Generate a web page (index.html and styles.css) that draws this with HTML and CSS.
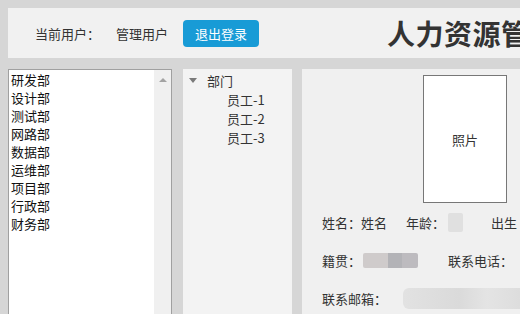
FILE: index.html
```html
<!DOCTYPE html>
<html lang="zh-CN">
<head>
  <meta charset="UTF-8" />
  <title>人力资源管理系统</title>
  <link rel="stylesheet" href="styles.css">
</head>
<body>
  <div class="header">
    <span class="user-label">当前用户：</span>
    <span class="user-name">管理用户</span>
    <button class="logout">退出登录</button>
    <h1 class="title">人力资源管理系统</h1>
  </div>

  <div class="main">
    <div class="dept-list">
      <ul class="items">
        <li>研发部</li>
        <li>设计部</li>
        <li>测试部</li>
        <li>网路部</li>
        <li>数据部</li>
        <li>运维部</li>
        <li>项目部</li>
        <li>行政部</li>
        <li>财务部</li>
      </ul>
      <div class="scrollbar"><span class="arrow-up"></span></div>
    </div>

    <div class="tree">
      <div class="tree-root"><span class="caret"></span>部门</div>
      <div class="tree-item">员工-1</div>
      <div class="tree-item">员工-2</div>
      <div class="tree-item">员工-3</div>
    </div>

    <div class="detail">
      <div class="photo">照片</div>
      <div class="row">
        <span class="f-name">姓名：姓名</span>
        <span>年龄：</span>
        <span class="blur b-age"></span>
        <span class="f-birth">出生</span>
      </div>
      <div class="row">
        <span>籍贯：</span>
        <span class="blur b-home"></span>
        <span class="f-phone">联系电话：</span>
      </div>
      <div class="row">
        <span>联系邮箱：</span>
        <span class="blur b-mail"></span>
      </div>
    </div>
  </div>
</body>
</html>
```

FILE: styles.css
```css
html, body {
  height: 100%;
}
body {
  margin: 8px 0 0 8px;
  background: #d6d6d6;
  font-family: "Microsoft YaHei", "Noto Sans CJK SC", sans-serif;
  font-size: 13px;
  color: #333;
  overflow: hidden;
}
.header {
  background: #f1f1f1;
  height: 50px;
  display: flex;
  align-items: center;
  padding-left: 27px;
  white-space: nowrap;
}
.header > * {
  flex: none;
}
.user-name {
  margin-left: 16px;
}
.logout {
  margin-left: 15px;
  width: 76px;
  height: 27px;
  border: none;
  border-radius: 4px;
  background: #189bd6;
  color: #fff;
  font-family: inherit;
  font-size: 13px;
  padding: 0;
}
.title {
  margin: 0 0 0 128px;
  font-size: 28px;
  font-weight: bold;
  color: #333;
  letter-spacing: 0.5px;
}
.main {
  display: flex;
  margin-top: 11px;
  height: 260px;
}
.dept-list {
  width: 162px;
  flex: none;
  background: #fff;
  border: 1px solid #a0a0a0;
  border-bottom: none;
  display: flex;
}
.items {
  list-style: none;
  margin: 0;
  padding: 1px 0 0 2px;
  flex: 1;
  color: #111;
}
.items li {
  line-height: 18px;
}
.scrollbar {
  width: 17px;
  background: #f0f0f0;
  position: relative;
}
.arrow-up {
  position: absolute;
  left: 5px;
  top: 8px;
  border-left: 4px solid transparent;
  border-right: 4px solid transparent;
  border-bottom: 4px solid #a3a3a3;
}
.tree {
  width: 109px;
  flex: none;
  margin-left: 11px;
  background: #f3f3f3;
  padding-top: 2px;
}
.tree-root {
  display: flex;
  align-items: center;
  line-height: 19px;
  padding-left: 6px;
}
.caret {
  border-left: 4px solid transparent;
  border-right: 4px solid transparent;
  border-top: 5px solid #7a7a7a;
  margin-right: 10px;
}
.tree-item {
  line-height: 19px;
  padding-left: 44px;
}
.detail {
  width: 300px;
  flex: none;
  margin-left: 10px;
  background: #f0f0f0;
  padding-top: 6px;
}
.photo {
  margin-left: 121px;
  width: 82px;
  height: 126px;
  background: #fff;
  border: 1px solid #777;
  display: flex;
  align-items: center;
  justify-content: center;
}
.row {
  display: flex;
  align-items: center;
  height: 38px;
  padding-left: 20px;
  white-space: nowrap;
}
.row:first-of-type {
  margin-top: 2px;
}
.f-name {
  width: 84px;
}
.blur {
  display: inline-block;
  height: 19px;
  background: #dcdcdc;
  border-radius: 2px;
}
.b-age {
  width: 15px;
  margin-left: 3px;
  background: #e0e0e0;
}
.f-birth {
  margin-left: 28px;
}
.b-home {
  width: 55px;
  height: 15px;
  margin-left: 2px;
  background: linear-gradient(to right, #cfcbcb 0 45%, #b3b3b7 45% 70%, #bdbbbf 70%);
}
.f-phone {
  margin-left: 30px;
}
.b-mail {
  width: 140px;
  height: 21px;
  margin-left: 16px;
  background: linear-gradient(to right, #e2e2e2, #dadada 40%, #e4e4e4 60%, #d8d8d8);
  border-radius: 6px;
}
```
